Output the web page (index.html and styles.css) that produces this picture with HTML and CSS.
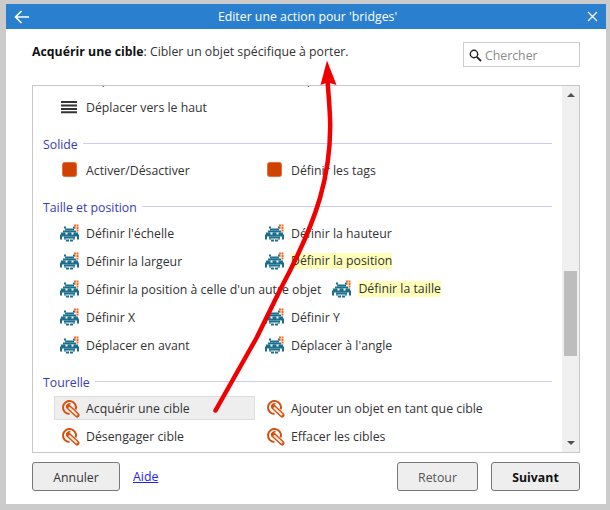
FILE: index.html
```html
<!DOCTYPE html>
<html lang="fr">
<head>
<meta charset="utf-8">
<title>Editer une action</title>
<link rel="stylesheet" href="styles.css">
</head>
<body>
<svg class="defs" width="0" height="0" aria-hidden="true">
  <symbol id="invader" viewBox="0 0 20 17">
    <g fill="#1b6f8c">
      <rect x="4" y="2" width="2" height="2"/><rect x="13" y="2" width="2" height="2"/>
      <rect x="5" y="4" width="9" height="2"/>
      <rect x="3" y="6" width="13" height="2"/>
      <rect x="1" y="8" width="17" height="4"/>
      <rect x="0" y="10" width="2" height="5"/><rect x="17" y="10" width="2" height="5"/>
      <rect x="4" y="12" width="11" height="2"/>
      <rect x="4" y="14" width="2" height="1"/><rect x="13" y="14" width="2" height="1"/>
      <rect x="6" y="15" width="3" height="2"/><rect x="10" y="15" width="3" height="2"/>
    </g>
    <rect x="5.500" y="8" width="2" height="2" fill="#fff"/><rect x="11.500" y="8" width="2" height="2" fill="#fff"/>
    <g fill="#ee6a1e">
      <rect x="14" y="0" width="2" height="2"/><rect x="16.500" y="0" width="2" height="2"/>
      <rect x="16.500" y="2.500" width="2" height="2"/><rect x="14" y="2.500" width="2" height="2" opacity=".6"/>
      <rect x="16.500" y="5" width="2" height="2"/>
    </g>
  </symbol>
  <symbol id="target" viewBox="0 0 20 20">
    <path d="M9.500 16a6.500 6.500 0 1 1 6.200-4.500" fill="none" stroke="#d5500f" stroke-width="2"/>
    <path d="M6.500 8.500a3 3 0 0 1 4-2.500" fill="none" stroke="#d5500f" stroke-width="1.500"/>
    <path d="M8.500 9l8.500 8" stroke="#d5500f" stroke-width="5" stroke-linecap="round"/>
    <path d="M9.500 10l7 6.500" stroke="#fbe9dc" stroke-width="2.200" stroke-linecap="round"/>
  </symbol>
  <symbol id="square" viewBox="0 0 20 20">
    <rect x="2.500" y="2.500" width="14" height="14" rx="2" fill="#cf4200" stroke="#e3703a"/>
  </symbol>
  <symbol id="lines" viewBox="0 0 20 20">
    <path d="M1 5h16M1 8.500h16M1 12h16M1 15.300h16" stroke="#333" stroke-width="2"/>
  </symbol>
</svg>

<main class="dialog">
  <header class="titlebar">
    <svg class="back" width="16" height="14" viewBox="0 0 16 14"><path d="M15 7H2M7.500 1L1.500 7l6 6" fill="none" stroke="#fff" stroke-width="1.600"/></svg>
    <h1 class="title">Editer une action pour 'bridges'</h1>
    <svg class="close" width="11" height="11" viewBox="0 0 11 11"><path d="M1 1l9 9M10 1l-9 9" stroke="#fff" stroke-width="1.200"/></svg>
  </header>

  <div class="intro">
    <p class="desc"><strong>Acquérir une cible</strong>: Cibler un objet spécifique à porter.</p>
    <label class="search">
      <svg width="13" height="13" viewBox="0 0 13 13"><circle cx="5" cy="5" r="3.700" fill="none" stroke="#222" stroke-width="1.400"/><path d="M7.800 7.800l4.200 4.200" stroke="#222" stroke-width="1.800"/></svg>
      <span>Chercher</span>
    </label>
  </div>

  <div class="list">
    <div class="pane">
      <div class="inner">
        <div class="row">
          <div class="item"><svg class="ico"><use href="#lines"/></svg><span>Déplacer vers le bas</span></div>
          <div class="item"><svg class="ico"><use href="#lines"/></svg><span>Déplacer</span></div>
        </div>
        <div class="row">
          <div class="item"><svg class="ico"><use href="#lines"/></svg><span>Déplacer vers le haut</span></div>
        </div>

        <h2 class="group"><span>Solide</span></h2>
        <div class="row">
          <div class="item"><svg class="ico"><use href="#square"/></svg><span>Activer/Désactiver</span></div>
          <div class="item"><svg class="ico"><use href="#square"/></svg><span>Définir les tags</span></div>
        </div>

        <h2 class="group"><span>Taille et position</span></h2>
        <div class="row">
          <div class="item"><svg class="ico"><use href="#invader"/></svg><span>Définir l'échelle</span></div>
          <div class="item"><svg class="ico"><use href="#invader"/></svg><span>Définir la hauteur</span></div>
        </div>
        <div class="row">
          <div class="item"><svg class="ico"><use href="#invader"/></svg><span>Définir la largeur</span></div>
          <div class="item"><svg class="ico"><use href="#invader"/></svg><span class="mark">Définir la position</span></div>
        </div>
        <div class="row">
          <div class="item"><svg class="ico"><use href="#invader"/></svg><span>Définir la position à celle d'un autre objet</span></div>
          <div class="item"><svg class="ico"><use href="#invader"/></svg><span class="mark">Définir la taille</span></div>
        </div>
        <div class="row">
          <div class="item"><svg class="ico"><use href="#invader"/></svg><span>Définir X</span></div>
          <div class="item"><svg class="ico"><use href="#invader"/></svg><span>Définir Y</span></div>
        </div>
        <div class="row">
          <div class="item"><svg class="ico"><use href="#invader"/></svg><span>Déplacer en avant</span></div>
          <div class="item"><svg class="ico"><use href="#invader"/></svg><span>Déplacer à l'angle</span></div>
        </div>

        <h2 class="group"><span>Tourelle</span></h2>
        <div class="row">
          <div class="item selected"><svg class="ico"><use href="#target"/></svg><span>Acquérir une cible</span></div>
          <div class="item"><svg class="ico"><use href="#target"/></svg><span>Ajouter un objet en tant que cible</span></div>
        </div>
        <div class="row">
          <div class="item"><svg class="ico"><use href="#target"/></svg><span>Désengager cible</span></div>
          <div class="item"><svg class="ico"><use href="#target"/></svg><span>Effacer les cibles</span></div>
        </div>
      </div>
    </div>
    <div class="scrollbar">
      <i class="arrow up"></i>
      <div class="track"><div class="thumb"></div></div>
      <i class="arrow down"></i>
    </div>
  </div>

  <footer class="actions">
    <button class="btn cancel" type="button">Annuler</button>
    <a class="help" href="#">Aide</a>
    <button class="btn back-btn" type="button">Retour</button>
    <button class="btn next" type="button">Suivant</button>
  </footer>
</main>

<svg class="annotation" width="610" height="510" viewBox="0 0 610 510" aria-hidden="true">
  <path d="M215.500 410.500L257 337L280 290C295 262 310 232 320 198C328 170 331 145 330 118C329.500 105 328.500 95 327.500 80" fill="none" stroke="#f00000" stroke-width="4.500" stroke-linecap="round"/>
  <path d="M327 60.500L336.500 85L328 82.500L320.500 85Z" fill="#f00000"/>
</svg>
</body>
</html>
```

FILE: styles.css
```css
* { box-sizing: border-box; }

html, body { margin: 0; height: 100%; }

body {
  background: #cbcbcb;
  padding: 4px 4px 6px 6px;
  overflow: hidden;
  font-family: "Open Sans", "Noto Sans", sans-serif;
  font-size: 12.3px;
  color: #333;
  position: relative;
}

.defs { position: absolute; }

.dialog {
  width: 600px;
  height: 500px;
  background: #fff;
  display: flex;
  flex-direction: column;
}

.titlebar {
  height: 25px;
  background: #2a7fce;
  color: #fff;
  display: flex;
  align-items: center;
  padding: 0 8px 0 8px;
  flex: none;
}

.title {
  flex: 1;
  margin: 0;
  font-size: 12.3px;
  font-weight: 500;
  text-align: center;
  padding-right: 2px;
}

.intro {
  height: 56px;
  flex: none;
  display: flex;
  justify-content: space-between;
  padding: 13px 26px 0;
}

.desc { margin: 1px 0 0; line-height: 18px; color: #333; }
.desc strong { color: #111; font-weight: 700; }

.search {
  width: 117px;
  height: 25px;
  border: 1px solid #ccc;
  display: flex;
  align-items: center;
  gap: 3px;
  padding: 1px 0 0 5px;
  color: #8a8a8a;
}

.list {
  flex: none;
  margin: 0 26px;
  width: 548px;
  height: 368px;
  border: 1px solid #c8c8c8;
  display: flex;
  overflow: hidden;
}

.pane { flex: 1; overflow: hidden; min-width: 0; }

.inner { margin-top: -21px; padding: 0 10px; }

.row { display: flex; height: 28px; align-items: center; padding-left: 11px; }

.item {
  display: flex;
  align-items: center;
  height: 24px;
  min-width: 200px;
  padding-left: 6px;
  margin-right: 5px;
  white-space: nowrap;
}

.item.selected {
  background: #eee;
  outline: 1px solid #ddd;
  outline-offset: -1px;
  margin-right: 4px;
  min-width: 201px;
}

.ico { width: 20px; height: 20px; flex: none; margin-right: 6px; }

.mark { background: #ffffb9; line-height: 16px; }

.group {
  margin: 14px 0 3px;
  height: 18px;
  display: flex;
  align-items: center;
  gap: 5px;
  font-size: 12.3px;
  font-weight: 400;
  color: #3a3ab8;
}

.group::after { content: ""; flex: 1; height: 1px; background: #ccccf6; margin-top: -1px; }

.scrollbar {
  width: 17px;
  flex: none;
  background: #f0f0f0;
  display: flex;
  flex-direction: column;
  align-items: center;
}

.arrow { flex: none; width: 0; height: 0; border-left: 4px solid transparent; border-right: 4px solid transparent; }
.arrow.up { border-bottom: 4px solid #505050; margin: 7px 0 0; }
.arrow.down { border-top: 4px solid #505050; margin: 0 0 7px; }

.track { flex: 1; width: 100%; padding: 174px 2px 0; }
.thumb { height: 85px; background: #bdbdbd; }

.actions {
  flex: 1;
  display: flex;
  align-items: flex-start;
  padding: 9px 26px 0;
}

.btn {
  height: 29px;
  background: #eee;
  border: 1px solid #777;
  border-radius: 3px;
  font: inherit;
  color: #333;
  padding: 1px 0 0;
}

.cancel { width: 88px; }
.help { margin: 6px auto 0 13px; color: #2222ee; line-height: 18px; }
.back-btn { width: 81px; color: #555; }
.next { width: 89px; margin-left: 13px; font-weight: 700; color: #111; }

.annotation { position: absolute; left: 0; top: 0; pointer-events: none; }
```
